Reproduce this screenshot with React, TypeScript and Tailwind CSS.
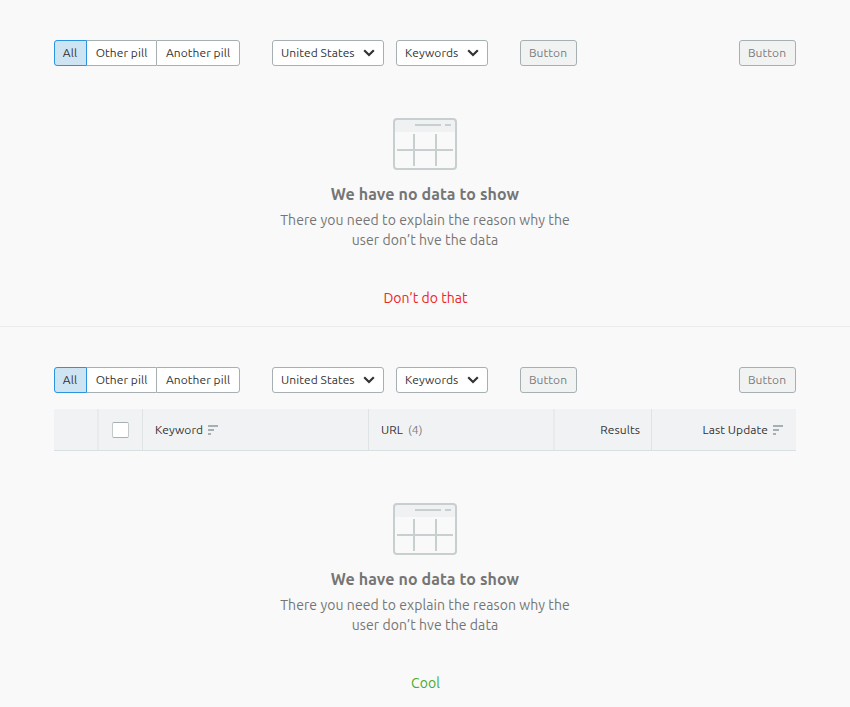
import type { ReactNode } from "react";

function Chevron() {
  return (
    <svg width="12" height="8" viewBox="0 0 12 8" className="shrink-0" fill="none" stroke="#333" strokeWidth="2.2">
      <path d="M1.2 1.2 6 6l4.8-4.8" />
    </svg>
  );
}

function SortIcon() {
  return (
    <svg width="10" height="10" viewBox="0 0 10 10" className="shrink-0" fill="#a6b0b3">
      <path d="M0 0h10v2H0zM0 4h6v2H0zM0 8h3v2H0z" />
    </svg>
  );
}

function TableIcon() {
  return (
    <svg width="64" height="52" viewBox="0 0 64 52" fill="none" stroke="#c8cfd1" strokeWidth="2">
      <path d="M2 2h60v12H2z" fill="#eff1f3" stroke="none" />
      <rect x="1" y="1" width="62" height="50" rx="3" />
      <path d="M22 7h26M52 7h6M21 16v32M43 16v32M4 32h56" />
    </svg>
  );
}

function Select({ children, className }: { children: ReactNode; className: string }) {
  return (
    <button className={`flex h-[26px] items-center justify-between rounded-[3px] border border-[#a6b0b3] bg-white pr-[8.5px] pl-2 ${className}`}>
      {children}
      <Chevron />
    </button>
  );
}

function DisabledButton({ className }: { className: string }) {
  return (
    <button disabled className={`h-[26px] w-[57px] rounded-[3px] border border-[#a6b0b3] bg-[#f1f3f3] pr-px text-[#7c7c7c] ${className}`}>
      Button
    </button>
  );
}

function Toolbar() {
  return (
    <div className="mx-[54px] flex h-[26px] tracking-[0.07px]">
      <div className="flex">
        <button className="w-[33px] rounded-l-[3px] border border-[#2b94e1] bg-[#cee4f3] pr-px">All</button>
        <button className="w-[69px] border-y border-[#a6b0b3] bg-white">Other pill</button>
        <button className="w-[84px] rounded-r-[3px] border border-[#a6b0b3] bg-white">Another pill</button>
      </div>
      <Select className="ml-8 w-[112px]">United States</Select>
      <Select className="ml-3 w-[92px]">Keywords</Select>
      <DisabledButton className="ml-8" />
      <DisabledButton className="ml-auto" />
    </div>
  );
}

function EmptyState() {
  return (
    <div className="flex flex-col items-center text-center text-[#757575]">
      <TableIcon />
      <h2 className="mt-3 text-base leading-6 font-bold tracking-[0.1px]">We have no data to show</h2>
      <p className="mt-1 text-sm leading-5 tracking-[0.08px]">
        There you need to explain the reason why the
        <br />
        user don’t hve the data
      </p>
    </div>
  );
}

function TableHeader() {
  return (
    <div className="mx-[54px] mt-4 flex h-[42px] items-stretch border-b border-[#d9e0e2] bg-[#f1f2f4] tracking-[0.07px] *:flex *:items-center">
      <div className="w-[45px] border-r-2 border-[#e8eaec]" />
      <div className="w-11 justify-center border-r border-[#dfe3e5] pr-px">
        <div className="h-4 w-[17px] rounded-[2px] border border-x-[#c3cacc] border-y-[#a6b0b3] bg-white" />
      </div>
      <div className="w-[226px] gap-[5px] border-r border-[#dfe3e5] pl-3">
        <span>Keyword</span>
        <SortIcon />
      </div>
      <div className="w-[186px] gap-[5px] border-r-2 border-[#e8eaec] pl-3">
        <span>URL</span>
        <span className="text-[#7c7c7c]">(4)</span>
      </div>
      <div className="w-[97px] justify-end border-r border-[#dfe3e5] pr-[11px]">Results</div>
      <div className="flex-1 justify-end gap-[5px] pr-[13px]">
        <span>Last Update</span>
        <SortIcon />
      </div>
    </div>
  );
}

export default function App() {
  return (
    <main className="h-[707px] w-[850px] overflow-hidden bg-[#f9f9f9] font-['Ubuntu','Noto_Sans',sans-serif] text-[12px] leading-[18px] whitespace-nowrap text-[#333]">
      <section className="h-[327px] border-b border-[#ebeced] pt-10">
        <Toolbar />
        <div className="h-[52px]" />
        <EmptyState />
        <p className="mt-[38px] pl-px text-center text-sm leading-5 tracking-[0.05px] text-[#ee2427]">Don’t do that</p>
      </section>
      <section className="pt-10">
        <Toolbar />
        <TableHeader />
        <div className="h-[52px]" />
        <EmptyState />
        <p className="mt-[38px] pl-px text-center text-sm leading-5 tracking-[0.05px] text-[#4aaa2c]">Cool</p>
      </section>
    </main>
  );
}
